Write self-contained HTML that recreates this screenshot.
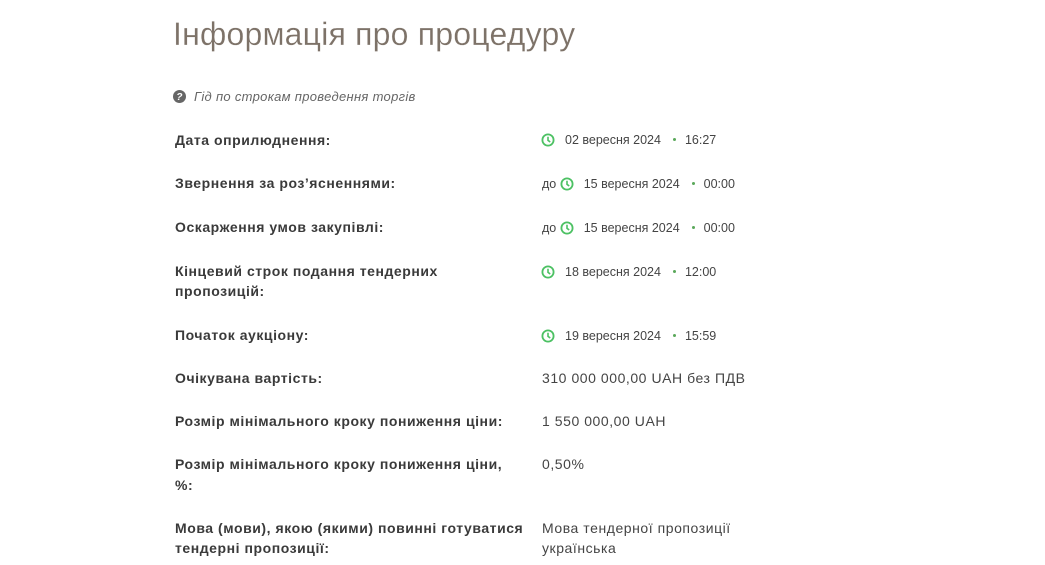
<!DOCTYPE html>
<html><head><meta charset="utf-8"><style>
body{margin:0;width:1045px;height:565px;background:#fff;font-family:"Liberation Sans",sans-serif;color:#333;position:relative;overflow:hidden}
.a{position:absolute;white-space:nowrap}
h1{position:absolute;left:173px;top:16px;margin:0;font-weight:normal;font-size:32px;color:#7d7268;letter-spacing:0.2px;-webkit-text-stroke:0.2px #fff}
.l{position:absolute;left:175px;font-weight:bold;font-size:14px;line-height:20px;color:#3a3a3a;letter-spacing:0.55px}
.v{position:absolute;left:542px;font-size:14px;line-height:20px;color:#444;letter-spacing:0.55px}
.d{position:absolute;font-size:12.5px;color:#444;line-height:16px;white-space:nowrap}
.d svg{vertical-align:-3px;margin-right:10px}
.dot{display:inline-block;width:3px;height:3px;border-radius:50%;background:#5aa85a;margin:0 9px 2px 12px;vertical-align:middle}
</style></head><body>
<h1>Інформація про процедуру</h1>
<div class="a" style="left:173px;top:89px;font-size:13px;font-style:italic;color:#666;letter-spacing:0.3px">
<svg width="13" height="13" viewBox="0 0 14 14" style="vertical-align:-2px;margin-right:8px"><circle cx="7" cy="7" r="7" fill="#666"/><text x="7" y="11" text-anchor="middle" font-size="11" font-weight="bold" fill="#fff" font-family="Liberation Sans">?</text></svg>Гід по строкам проведення торгів</div>
<svg width="0" height="0" style="position:absolute"><defs><g id="c"><circle cx="7" cy="7" r="5.6" fill="none" stroke="#4cc163" stroke-width="1.8"/><path d="M7 3.8V7.3L9.2 9" fill="none" stroke="#4cc163" stroke-width="1.6"/></g></defs></svg>

<div class="l" style="top:130px">Дата оприлюднення:</div>
<div class="d" style="left:541px;top:132px"><svg width="14" height="14"><use href="#c"/></svg>02 вересня 2024<span class="dot"></span>16:27</div>

<div class="l" style="top:173px">Звернення за роз’ясненнями:</div>
<div class="d" style="left:542px;top:176px">до <svg width="14" height="14"><use href="#c"/></svg>15 вересня 2024<span class="dot"></span>00:00</div>

<div class="l" style="top:217px">Оскарження умов закупівлі:</div>
<div class="d" style="left:542px;top:220px">до <svg width="14" height="14"><use href="#c"/></svg>15 вересня 2024<span class="dot"></span>00:00</div>

<div class="l" style="top:261px">Кінцевий строк подання тендерних<br>пропозицій:</div>
<div class="d" style="left:541px;top:264px"><svg width="14" height="14"><use href="#c"/></svg>18 вересня 2024<span class="dot"></span>12:00</div>

<div class="l" style="top:325px">Початок аукціону:</div>
<div class="d" style="left:541px;top:328px"><svg width="14" height="14"><use href="#c"/></svg>19 вересня 2024<span class="dot"></span>15:59</div>

<div class="l" style="top:368px">Очікувана вартість:</div>
<div class="v" style="top:368px">310 000 000,00 UAH без ПДВ</div>

<div class="l" style="top:411px">Розмір мінімального кроку пониження ціни:</div>
<div class="v" style="top:411px">1 550 000,00 UAH</div>

<div class="l" style="top:454px;line-height:21px">Розмір мінімального кроку пониження ціни,<br>%:</div>
<div class="v" style="top:454px">0,50%</div>

<div class="l" style="top:518px">Мова (мови), якою (якими) повинні готуватися<br>тендерні пропозиції:</div>
<div class="v" style="top:518px">Мова тендерної пропозиції<br>українська</div>
</body></html>
